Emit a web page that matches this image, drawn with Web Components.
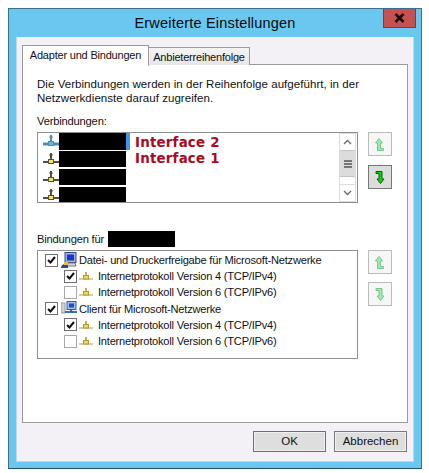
<!DOCTYPE html>
<html>
<head>
<meta charset="utf-8">
<style>
  html, body { margin: 0; background: #fff; }
  body { padding: 8px; font: 11.2px "Liberation Sans", sans-serif; letter-spacing: -.2px; color: #111; }
</style>
</head>
<body>
<dialog-window heading="Erweiterte Einstellungen">
  <tab-strip slot="tabs"></tab-strip>
  <div slot="note">Die Verbindungen werden in der Reihenfolge aufgeführt, in der<br>Netzwerkdienste darauf zugreifen.</div>
  <connection-list slot="connections"></connection-list>
  <binding-tree slot="bindings"></binding-tree>
</dialog-window>

<script>
const ICONS = {
  net: (c, d, w) => `<svg width="16" height="16" viewBox="0 0 16 16">
    <path d="M0 11h16" stroke="${d}" stroke-width="${w}" fill="none"/>
    <path d="M7 2h2v6H7z" fill="${d}"/>
    <path d="M6 4h4" stroke="${d}" stroke-width="1"/>
    <rect x="5.500" y="8.500" width="5" height="4" fill="${c}" stroke="${d}" stroke-width="1"/>
  </svg>`,
  small: `<svg width="14" height="10" viewBox="0 0 14 10">
    <path d="M0 8h14" stroke="#c4b078" stroke-width="1.300"/>
    <path d="M6 1h2v4H6z" fill="#c8ac50"/>
    <rect x="4.500" y="4.500" width="5" height="3.500" fill="#f4d858" stroke="#b09838"/>
  </svg>`,
  share: `<svg width="16" height="17" viewBox="0 0 16 17">
    <rect x="4" y="0.500" width="11" height="10" fill="#9fb4dc" stroke="#3a4c90"/>
    <rect x="6" y="2.500" width="7" height="6" fill="#1a38c8"/>
    <path d="M5 11h9l1 3H4z" fill="#d8d8d8" stroke="#777"/>
    <path d="M0 16c0-3 2-4 4-4h3v4z" fill="#2046b8"/>
    <rect x="3" y="10" width="4" height="3" fill="#e8c040"/>
  </svg>`,
  client: `<svg width="16" height="15" viewBox="0 0 16 15">
    <rect x="0" y="2" width="4" height="10" fill="#d0d0d0" stroke="#9a9a9a"/>
    <rect x="6" y="0.500" width="9" height="8" fill="#9fc0e8" stroke="#3a5cb0"/>
    <rect x="8" y="2.500" width="5" height="4" fill="#2048d0"/>
    <path d="M4 11h12" stroke="#3c6cc8" stroke-width="2"/>
    <path d="M10 8v3" stroke="#3a5cb0" stroke-width="2"/>
  </svg>`,
  up: (c, e) => `<svg width="10" height="13" viewBox="0 0 10 13">
    <path d="M4 .5L.5 5H2.500V12.500H8.500V10.500H5.500V5H7.500z" fill="${c}" stroke="${e}" stroke-width="1"/>
  </svg>`,
  down: (c, e) => `<svg width="10" height="13" viewBox="0 0 10 13">
    <path d="M5.500 12.500L9 8H7V.5H1V2.500H4V8H2z" fill="${c}" stroke="${e}" stroke-width="1"/>
  </svg>`
};

class DialogWindow extends HTMLElement {
  constructor() {
    super();
    this.attachShadow({ mode: "open" });
    this.shadowRoot.innerHTML = `
      <style>
        :host { display: flex; flex-direction: column; box-sizing: border-box; width: 414px; height: 461px; background: #6ac8f0; border: 1px solid #3d6f8c; border-bottom-color: #24506c; position: relative; padding: 0 7px 6px; }
        .title { height: 28px; flex: none; font-size: 14.5px; letter-spacing: .2px; text-align: center; line-height: 29px; color: #0a0a0a; }
        .close { position: absolute; top: 0; right: 5px; width: 33px; height: 19px; background: #c75050; border: solid #7f3a3a; border-width: 0 1px 1px; box-sizing: border-box; display: flex; align-items: center; justify-content: center; }
        .body { flex: 1; background: #f3f1f6; padding: 8px 5px 0; display: flex; flex-direction: column; border: 1px solid #c8d4e0; border-width: 0 1px 1px; }
        .panel { box-sizing: border-box; height: 359px; background: #fff; border: 1px solid #9e9a9e; padding: 13px 14px 0; margin-top: -1px; display: flex; flex-direction: column; }
        .note { font-size: 11.5px; letter-spacing: .05px; line-height: 13.5px; height: 36px; }
        .label { line-height: 15px; height: 18px; }
        .section { display: grid; grid-template-columns: 321px 24px; column-gap: 10px; }
        .bind { display: flex; align-items: center; gap: 4px; margin-top: 27px; height: 18px; }
        .mask { width: 67px; height: 16px; background: #000; }
        .foot { display: flex; justify-content: flex-end; gap: 8px; margin-top: 8px; padding-right: 1px; }
      </style>
      <div class="title">${this.getAttribute("heading")}</div>
      <div class="close"><svg width="11" height="10" viewBox="0 0 11 10"><path d="M1.500 1l8 8M9.500 1l-8 8" stroke="#1c0c0c" stroke-width="2.600"/></svg></div>
      <div class="body">
        <slot name="tabs"></slot>
        <div class="panel">
          <div class="note"><slot name="note"></slot></div>
          <div class="label">Verbindungen:</div>
          <div class="section">
            <slot name="connections"></slot>
            <arrow-pair active gap="9"></arrow-pair>
          </div>
          <div class="bind"><span>Bindungen für</span><span class="mask"></span></div>
          <div class="section" style="margin-top:2px">
            <slot name="bindings"></slot>
            <arrow-pair gap="8"></arrow-pair>
          </div>
        </div>
        <div class="foot">
          <push-button default>OK</push-button>
          <push-button>Abbrechen</push-button>
        </div>
      </div>`;
  }
}

class TabStrip extends HTMLElement {
  constructor() {
    super();
    this.attachShadow({ mode: "open" });
    this.shadowRoot.innerHTML = `
      <style>
        :host { display: flex; align-items: flex-end; height: 20px; position: relative; z-index: 1; font-size: 11px; }
        .tab { box-sizing: border-box; border: 1px solid #9e9a9e; border-bottom: 0; text-align: center; white-space: nowrap; }
        .on { width: 127px; height: 21px; margin-bottom: -1px; background: #fff; line-height: 19px; }
        .off { width: 101px; height: 18px; border-left: 0; background: linear-gradient(#f4f4f4, #e6e6e6); line-height: 18px; }
      </style>
      <div class="tab on">Adapter und Bindungen</div>
      <div class="tab off">Anbieterreihenfolge</div>`;
  }
}

class ConnectionList extends HTMLElement {
  constructor() {
    super();
    this.attachShadow({ mode: "open" });
    const rows = [0, 1, 2, 3].map(i => `
      <div class="row">
        ${i === 0 ? ICONS.net("#68b4d8", "#4a8fb8", 3) : ICONS.net("#f4e060", "#55503a", 2)}
        <div class="mask ${i === 0 ? "sel" : ""}"></div>
      </div>`).join("");
    this.shadowRoot.innerHTML = `
      <style>
        :host { display: block; box-sizing: border-box; width: 321px; height: 71px; border: 1px solid #8e8e8e; position: relative; overflow: hidden; background: #fff; }
        .rows { padding: 0 0 0 5px; }
        .row { display: flex; align-items: flex-start; height: 18px; }
        .row svg { flex: none; }
        .mask { width: 67px; height: 16px; background: #000; box-sizing: content-box; }
        .sel { height: 17px; border-right: 4px solid #3f96ee; }
        .tag { position: absolute; left: 97px; top: 2px; font: bold 13.4px/16px "DejaVu Sans", sans-serif; color: #a80a1e; letter-spacing: .2px; }
        scroll-bar { position: absolute; right: 1px; top: 0; }
      </style>
      <div class="rows">${rows}</div>
      <div class="tag">Interface 2<br>Interface 1</div>
      <scroll-bar></scroll-bar>`;
  }
}

class ScrollBar extends HTMLElement {
  constructor() {
    super();
    this.attachShadow({ mode: "open" });
    this.shadowRoot.innerHTML = `
      <style>
        :host { display: flex; flex-direction: column; box-sizing: border-box; width: 17px; height: 69px; background: #fff; border: solid #dcdcdc; border-width: 1px 1px 0; }
        .btn { height: 16px; display: flex; align-items: center; justify-content: center; flex: none; }
        .thumb { height: 27px; flex: none; background: #dcdcdc; border: solid #c4c4c4; border-width: 1px 0; box-sizing: border-box; display: flex; align-items: center; justify-content: center; }
        .track { flex: 1; }
        .end { border-top: 1px solid #dcdcdc; border-bottom: 1px solid #dcdcdc; }
      </style>
      <div class="btn"><svg width="9" height="6" viewBox="0 0 9 6"><path d="M1 5l3.500-3.500L8 5" fill="none" stroke="#666" stroke-width="1.300"/></svg></div>
      <div class="thumb"><svg width="8" height="8" viewBox="0 0 8 8"><path d="M0 1h8M0 4h8M0 7h8" stroke="#555" stroke-width="1.500"/></svg></div>
      <div class="track"></div>
      <div class="btn end"><svg width="9" height="6" viewBox="0 0 9 6"><path d="M1 1l3.500 3.500L8 1" fill="none" stroke="#666" stroke-width="1.300"/></svg></div>`;
  }
}

class ArrowPair extends HTMLElement {
  constructor() {
    super();
    this.attachShadow({ mode: "open" });
    const on = this.hasAttribute("active");
    this.shadowRoot.innerHTML = `
      <style>
        :host { display: flex; flex-direction: column; gap: ${this.getAttribute("gap")}px; }
        .b { box-sizing: border-box; width: 24px; height: 24px; border: 1px solid #bcbcbc; background: #f6f6f6; display: flex; align-items: center; justify-content: center; }
        .hot { border-color: #777; background: #dcdcdc; }
      </style>
      <div class="b">${ICONS.up("#a0e8b0", "#78c888")}</div>
      <div class="b ${on ? "hot" : ""}">${on ? ICONS.down("#00e000", "#0a5a0a") : ICONS.down("#a0e8b0", "#78c888")}</div>`;
  }
}

class BindingTree extends HTMLElement {
  constructor() {
    super();
    this.attachShadow({ mode: "open" });
    const v4 = "Internetprotokoll Version 4 (TCP/IPv4)";
    const v6 = "Internetprotokoll Version 6 (TCP/IPv6)";
    this.shadowRoot.innerHTML = `
      <style>
        :host { display: block; box-sizing: border-box; width: 321px; height: 109px; border: 1px solid #8e8e8e; background: #fff; padding-top: 1px; font-size: 11.1px; letter-spacing: -.22px; }
      </style>
      <tree-row icon="share" checked>Datei- und Druckerfreigabe für Microsoft-Netzwerke</tree-row>
      <tree-row indent checked>${v4}</tree-row>
      <tree-row indent>${v6}</tree-row>
      <tree-row icon="client" checked>Client für Microsoft-Netzwerke</tree-row>
      <tree-row indent checked>${v4}</tree-row>
      <tree-row indent>${v6}</tree-row>`;
  }
}

class TreeRow extends HTMLElement {
  constructor() {
    super();
    this.attachShadow({ mode: "open" });
    const indent = this.hasAttribute("indent");
    const checked = this.hasAttribute("checked");
    const icon = indent ? ICONS.small : ICONS[this.getAttribute("icon")];
    this.shadowRoot.innerHTML = `
      <style>
        :host { display: flex; align-items: center; height: 16.2px; padding-left: ${indent ? 26 : 7}px; white-space: nowrap; }
        .box { box-sizing: border-box; width: 13px; height: 13px; border: 1px solid ${checked ? "#707070" : "#a8a8a8"}; background: #fff; flex: none; display: flex; align-items: center; justify-content: center; }
        .icon { flex: none; width: ${indent ? 14 : 16}px; margin: 0 ${indent ? 5 : 2}px 0 ${indent ? 2 : 3}px; display: flex; justify-content: center; }
      </style>
      <div class="box">${checked ? `<svg width="9" height="8" viewBox="0 0 9 8"><path d="M1 4l2.500 2.500L8 1" fill="none" stroke="#111" stroke-width="2"/></svg>` : ""}</div>
      <div class="icon">${icon}</div>
      <slot></slot>`;
  }
}

class PushButton extends HTMLElement {
  constructor() {
    super();
    this.attachShadow({ mode: "open" });
    const main = this.hasAttribute("default");
    this.shadowRoot.innerHTML = `
      <style>
        :host { display: block; box-sizing: border-box; width: 73px; height: 21px; text-align: center; line-height: 19px; font-size: 11.5px; letter-spacing: 0; background: #dedede; border: 1px solid ${main ? "#2f80b8" : "#7a7a7a"}; box-shadow: inset 0 0 0 1px #f0f0f0; }
      </style>
      <slot></slot>`;
  }
}

customElements.define("push-button", PushButton);
customElements.define("tree-row", TreeRow);
customElements.define("binding-tree", BindingTree);
customElements.define("arrow-pair", ArrowPair);
customElements.define("scroll-bar", ScrollBar);
customElements.define("connection-list", ConnectionList);
customElements.define("tab-strip", TabStrip);
customElements.define("dialog-window", DialogWindow);
</script>
</body>
</html>
